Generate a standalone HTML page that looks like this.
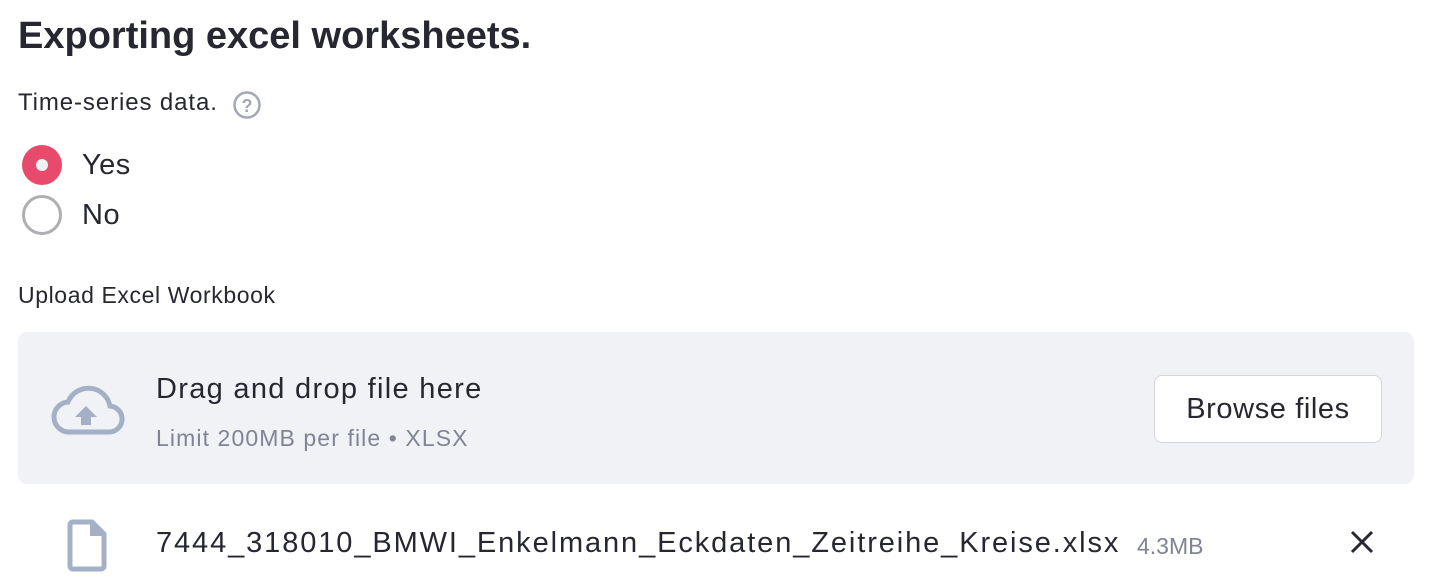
<!DOCTYPE html><html><head><style>
body{margin:0;width:1434px;height:584px;background:#fff;font-family:"Liberation Sans",sans-serif;color:#262730;position:relative;overflow:hidden}
.a{position:absolute;white-space:nowrap}
</style></head><body>
<div class="a" style="left:18px;top:15px;font-size:38px;font-weight:bold;letter-spacing:0px">Exporting excel worksheets.</div>
<div class="a" style="left:18px;top:89px;font-size:24px;letter-spacing:0.9px">Time-series data.</div>
<svg class="a" style="left:232px;top:90px" width="30" height="30" viewBox="0 0 30 30"><circle cx="15" cy="15" r="12.5" fill="none" stroke="#a3a8b4" stroke-width="2.5"/><text x="15" y="22" font-size="18" font-family="Liberation Sans" fill="#a3a8b4" text-anchor="middle" font-weight="bold">?</text></svg>
<svg class="a" style="left:20px;top:143px" width="44" height="44"><circle cx="22" cy="22" r="20" fill="#e84a6c"/><circle cx="22" cy="22" r="6" fill="#f0f2f6"/></svg>
<div class="a" style="left:82px;top:149px;font-size:29px;letter-spacing:0.5px">Yes</div>
<svg class="a" style="left:20px;top:193px" width="44" height="44"><circle cx="22" cy="22" r="18.5" fill="none" stroke="#afafb3" stroke-width="3"/></svg>
<div class="a" style="left:82px;top:199px;font-size:29px;letter-spacing:0.5px">No</div>
<div class="a" style="left:18px;top:282px;font-size:23px;letter-spacing:0.6px">Upload Excel Workbook</div>
<div class="a" style="left:18px;top:332px;width:1396px;height:152px;background:#f0f2f6;border-radius:9px"></div>
<svg class="a" style="left:48px;top:382px" width="80" height="56" viewBox="0 0 80 56"><path d="M22 50 H60 A13 13 0 0 0 62 24 A22 22 0 0 0 20 20 A15 15 0 0 0 22 50 Z" fill="none" stroke="#a3b0c6" stroke-width="5"/><path d="M38 24 L27 35 H33 V43 H43 V35 H49 Z" fill="#a3b0c6"/></svg>
<div class="a" style="left:156px;top:373px;font-size:29px;letter-spacing:1.3px">Drag and drop file here</div>
<div class="a" style="left:156px;top:425px;font-size:23px;letter-spacing:1.1px;color:#808495">Limit 200MB per file • XLSX</div>
<div class="a" style="left:1154px;top:375px;border:1px solid #d6d6d9;border-radius:8px;background:#fff;box-sizing:border-box;width:228px;height:68px;text-align:center;line-height:66px;font-size:29px;letter-spacing:0.6px">Browse files</div>
<svg class="a" style="left:66px;top:518px" width="42" height="54" viewBox="0 0 42 54"><path d="M7 4 H26 L38 16 V48 A3 3 0 0 1 35 51 H7 A3 3 0 0 1 4 48 V7 A3 3 0 0 1 7 4 Z" fill="none" stroke="#a3b0c6" stroke-width="5"/><path d="M24 4 V18 H38" fill="#a3b0c6"/></svg>
<div class="a" style="left:156px;top:527px;font-size:29px;letter-spacing:1.9px">7444_318010_BMWI_Enkelmann_Eckdaten_Zeitreihe_Kreise.xlsx</div>
<div class="a" style="left:1137px;top:533px;font-size:23px;color:#808495">4.3MB</div>
<svg class="a" style="left:1350px;top:530px" width="24" height="24"><path d="M2 2 L22 22 M22 2 L2 22" stroke="#262730" stroke-width="3"/></svg>
</body></html>
